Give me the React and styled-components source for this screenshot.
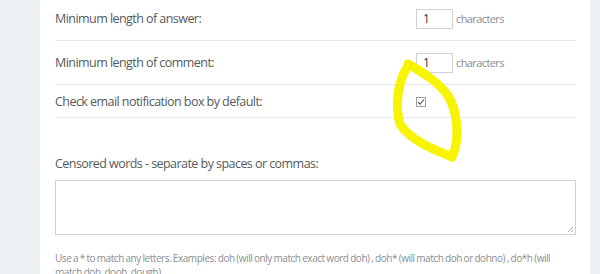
import styled, { createGlobalStyle } from "styled-components";

const GlobalStyle = createGlobalStyle`
  html, body {
    margin: 0;
    padding: 0;
    background: #eef1f3;
    overflow: hidden;
  }
  body {
    font-family: "Open Sans", "Noto Sans", sans-serif;
  }
`;

const Layout = styled.div`
  display: grid;
  grid-template-columns: 40px 550px 10px;
  height: 274px;
  position: relative;
`;

const Side = styled.div`
  background: #eef1f3;
`;

const Panel = styled.div`
  background: #ffffff;
  padding: 0 14px 0 15px;
  overflow: hidden;
`;

const Rows = styled.div`
  margin-top: -3px;
`;

const Row = styled.div`
  display: flex;
  align-items: center;
  height: ${(p) => p.$h}px;
  border-bottom: 1px solid #e6e8ea;
  box-sizing: border-box;
`;

const Label = styled.div`
  width: 361px;
  font-size: 12.5px;
  color: #555a5e;
  letter-spacing: -0.55px;
`;

const Control = styled.div`
  display: flex;
  align-items: center;
  gap: 3px;
`;

const NumberBox = styled.div`
  width: 37px;
  height: 20px;
  box-sizing: border-box;
  border: 1px solid #cfd3d6;
  font-size: 12px;
  color: #333;
  padding-left: 6px;
  line-height: 18px;
`;

const Unit = styled.span`
  font-size: 11px;
  color: #8a8e92;
  letter-spacing: -0.6px;
`;

const Check = styled.span`
  display: inline-flex;
  width: 10px;
  height: 10px;
  box-sizing: border-box;
  border: 1px solid #9a9ea2;
  align-items: center;
  justify-content: center;
  margin-top: 1px;
`;

const Section = styled.div`
  padding-top: 36px;
`;

const SectionLabel = styled.div`
  font-size: 12.5px;
  line-height: 20px;
  color: #555a5e;
  letter-spacing: -0.55px;
  margin-bottom: 6px;
`;

const TextArea = styled.div`
  height: 55px;
  box-sizing: border-box;
  border: 1px solid #cfd3d6;
  position: relative;
`;

const Grip = styled.svg`
  position: absolute;
  right: 1px;
  bottom: 1px;
`;

const Help = styled.p`
  margin: 16px 0 0;
  font-size: 10px;
  line-height: 14px;
  color: #8a8e92;
  letter-spacing: -0.45px;
  word-spacing: -0.5px;
`;

const Marker = styled.svg`
  position: absolute;
  left: 0;
  top: 0;
  pointer-events: none;
`;

export default function App() {
  return (
    <Layout>
      <GlobalStyle />
      <Side />
      <Panel>
        <Rows>
          <Row $h={44}>
            <Label>Minimum length of answer:</Label>
            <Control>
              <NumberBox>1</NumberBox>
              <Unit>characters</Unit>
            </Control>
          </Row>
          <Row $h={44}>
            <Label>Minimum length of comment:</Label>
            <Control>
              <NumberBox>1</NumberBox>
              <Unit>characters</Unit>
            </Control>
          </Row>
          <Row $h={33}>
            <Label>Check email notification box by default:</Label>
            <Control>
              <Check>
                <svg width="8" height="8" viewBox="0 0 8 8">
                  <path d="M1 4.2 L3 6.2 L7 1.5" fill="none" stroke="#555" strokeWidth="1.1" />
                </svg>
              </Check>
            </Control>
          </Row>
        </Rows>
        <Section>
          <SectionLabel>Censored words - separate by spaces or commas:</SectionLabel>
          <TextArea>
            <Grip width="7" height="7" viewBox="0 0 7 7">
              <path d="M6 1 L1 6 M6 4 L4 6" stroke="#999" strokeWidth="0.8" />
            </Grip>
          </TextArea>
          <Help>
            Use a * to match any letters. Examples: doh (will only match exact word doh) , doh* (will match doh or dohno) , do*h (will
            match doh, dooh, dough).
          </Help>
        </Section>
      </Panel>
      <Side />
      <Marker width="600" height="274" viewBox="0 0 600 274">
        <path
          d="M408 66 C397 82 395 108 400 124 C410 141 438 151 452 157 C460 140 458 112 448 96 C439 82 422 72 408 64"
          fill="none"
          stroke="#f8f400"
          strokeWidth="9"
          strokeLinecap="round"
          strokeLinejoin="round"
        />
      </Marker>
    </Layout>
  );
}
